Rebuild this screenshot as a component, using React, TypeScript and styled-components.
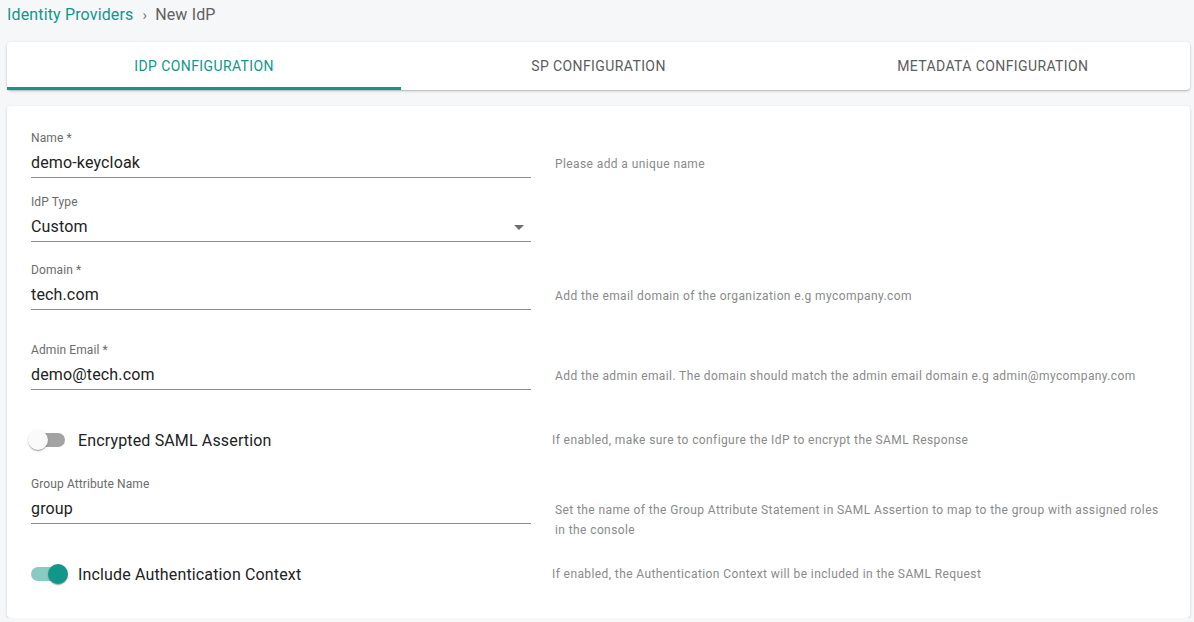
import React from "react";
import styled, { createGlobalStyle } from "styled-components";

const TEAL = "#11968a";

const GlobalStyle = createGlobalStyle`
  html, body { margin: 0; padding: 0; }
  body {
    background: #f6f7f9;
    font-family: Roboto, "Liberation Sans", Arial, sans-serif;
    -webkit-font-smoothing: antialiased;
  }
  * { box-sizing: border-box; }
`;

const Page = styled.div`
  padding: 0 4px 0 7px;
  width: 1194px;
`;

const Breadcrumb = styled.nav`
  height: 28px;
  padding-top: 1px;
  display: flex;
  align-items: center;
  font-size: 16px;
  line-height: 20px;
  letter-spacing: 0.15px;
  color: #616161;
`;

const Crumb = styled.span<{ $link?: boolean }>`
  color: ${(p) => (p.$link ? TEAL : "#616161")};
`;

const Sep = styled.span`
  margin: 0 8px 0 9px;
  color: #757575;
  font-size: 15px;
`;

const TabsCard = styled.div`
  margin-top: 14px;
  height: 48px;
  display: grid;
  grid-template-columns: repeat(3, 1fr);
  background: #fff;
  border-radius: 4px;
  box-shadow: 0 1px 3px rgba(0, 0, 0, 0.22), 0 1px 1px rgba(0, 0, 0, 0.08);
`;

const Tab = styled.div<{ $active?: boolean }>`
  display: flex;
  align-items: center;
  justify-content: center;
  font-size: 14px;
  letter-spacing: 0.4px;
  text-transform: uppercase;
  color: ${(p) => (p.$active ? TEAL : "#5c5c5c")};
  box-shadow: ${(p) => (p.$active ? `inset 0 -3px 0 ${TEAL}` : "none")};
  padding-bottom: 1px;
`;

const FormCard = styled.div`
  margin-top: 16px;
  background: #fff;
  border-radius: 4px;
  padding: 25px 24px 25px 24px;
  box-shadow: 0 1px 3px rgba(0, 0, 0, 0.16), 0 1px 1px rgba(0, 0, 0, 0.06);
`;

const FieldRow = styled.div<{ $mt: number }>`
  display: grid;
  grid-template-columns: 500px 1fr;
  column-gap: 24px;
  align-items: start;
  margin-top: ${(p) => p.$mt}px;
`;

const Field = styled.div`
  display: flex;
  flex-direction: column;
`;

const Label = styled.label`
  font-size: 12px;
  line-height: 14px;
  color: #6b6b6b;
  letter-spacing: 0.1px;
`;

const InputLine = styled.div`
  margin-top: 6px;
  height: 27px;
  padding-bottom: 2px;
  border-bottom: 1px solid #8c8c8c;
  display: flex;
  align-items: center;
  justify-content: space-between;
  font-size: 16px;
  line-height: 24px;
  color: #222;
  letter-spacing: 0.15px;
`;

const Arrow = styled.svg`
  width: 24px;
  height: 24px;
  fill: #6e6e6e;
`;

const Helper = styled.div<{ $pt?: number }>`
  padding-top: ${(p) => (p.$pt ?? 23)}px;
  font-size: 12px;
  line-height: 20px;
  letter-spacing: 0.4px;
  color: #8a8a8a;
  max-width: 612px;
`;

const SwitchRow = styled.div<{ $mt: number }>`
  display: grid;
  grid-template-columns: 500px 1fr;
  column-gap: 21px;
  align-items: center;
  margin-top: ${(p) => p.$mt}px;
`;

const SwitchLabel = styled.label`
  display: flex;
  align-items: center;
  margin-left: -12px;
  font-size: 16px;
  color: #222;
  letter-spacing: 0.15px;
`;

const SwitchRoot = styled.span`
  width: 58px;
  height: 38px;
  padding: 12px;
  position: relative;
  display: inline-flex;
  flex-shrink: 0;
`;

const Track = styled.span<{ $on?: boolean }>`
  width: 34px;
  height: 14px;
  border-radius: 7px;
  background: ${(p) => (p.$on ? TEAL : "#000")};
  opacity: ${(p) => (p.$on ? 0.5 : 0.36)};
`;

const Thumb = styled.span<{ $on?: boolean }>`
  position: absolute;
  top: 9px;
  left: ${(p) => (p.$on ? 29 : 9)}px;
  width: 20px;
  height: 20px;
  border-radius: 50%;
  background: ${(p) => (p.$on ? TEAL : "#fafafa")};
  box-shadow: 0 2px 1px -1px rgba(0, 0, 0, 0.2), 0 1px 1px rgba(0, 0, 0, 0.14),
    0 1px 3px rgba(0, 0, 0, 0.12);
`;

const Switch = ({ on }: { on?: boolean }) => (
  <SwitchRoot>
    <Track $on={on} />
    <Thumb $on={on} />
  </SwitchRoot>
);

const SwitchText = styled.span`
  margin-left: 1px;
`;

type Row =
  | { kind: "field"; mt: number; label: string; value: string; helper?: string; select?: boolean }
  | { kind: "switch"; mt: number; label: string; on: boolean; helper: string };

const rows: Row[] = [
  { kind: "field", mt: 0, label: "Name *", value: "demo-keycloak", helper: "Please add a unique name" },
  { kind: "field", mt: 17, label: "IdP Type", value: "Custom", select: true },
  {
    kind: "field",
    mt: 21,
    label: "Domain *",
    value: "tech.com",
    helper: "Add the email domain of the organization e.g mycompany.com",
  },
  {
    kind: "field",
    mt: 33,
    label: "Admin Email *",
    value: "demo@tech.com",
    helper: "Add the admin email. The domain should match the admin email domain e.g admin@mycompany.com",
  },
  {
    kind: "switch",
    mt: 31,
    label: "Encrypted SAML Assertion",
    on: false,
    helper: "If enabled, make sure to configure the IdP to encrypt the SAML Response",
  },
  {
    kind: "field",
    mt: 18,
    label: "Group Attribute Name",
    value: "group",
    helper:
      "Set the name of the Group Attribute Statement in SAML Assertion to map to the group with assigned roles in the console",
  },
  {
    kind: "switch",
    mt: 15,
    label: "Include Authentication Context",
    on: true,
    helper: "If enabled, the Authentication Context will be included in the SAML Request",
  },
];

export default function App() {
  return (
    <Page>
      <GlobalStyle />
      <Breadcrumb>
        <Crumb $link>Identity Providers</Crumb>
        <Sep>›</Sep>
        <Crumb>New IdP</Crumb>
      </Breadcrumb>
      <TabsCard>
        <Tab $active>IdP Configuration</Tab>
        <Tab>SP Configuration</Tab>
        <Tab>Metadata Configuration</Tab>
      </TabsCard>
      <FormCard>
        {rows.map((r) =>
          r.kind === "field" ? (
            <FieldRow key={r.label} $mt={r.mt}>
              <Field>
                <Label>{r.label}</Label>
                <InputLine>
                  <span>{r.value}</span>
                  {r.select && (
                    <Arrow viewBox="0 0 24 24">
                      <path d="M7 10l5 5 5-5z" />
                    </Arrow>
                  )}
                </InputLine>
              </Field>
              {r.helper ? <Helper>{r.helper}</Helper> : <div />}
            </FieldRow>
          ) : (
            <SwitchRow key={r.label} $mt={r.mt}>
              <SwitchLabel>
                <Switch on={r.on} />
                <SwitchText>{r.label}</SwitchText>
              </SwitchLabel>
              <Helper $pt={0}>{r.helper}</Helper>
            </SwitchRow>
          )
        )}
      </FormCard>
    </Page>
  );
}
